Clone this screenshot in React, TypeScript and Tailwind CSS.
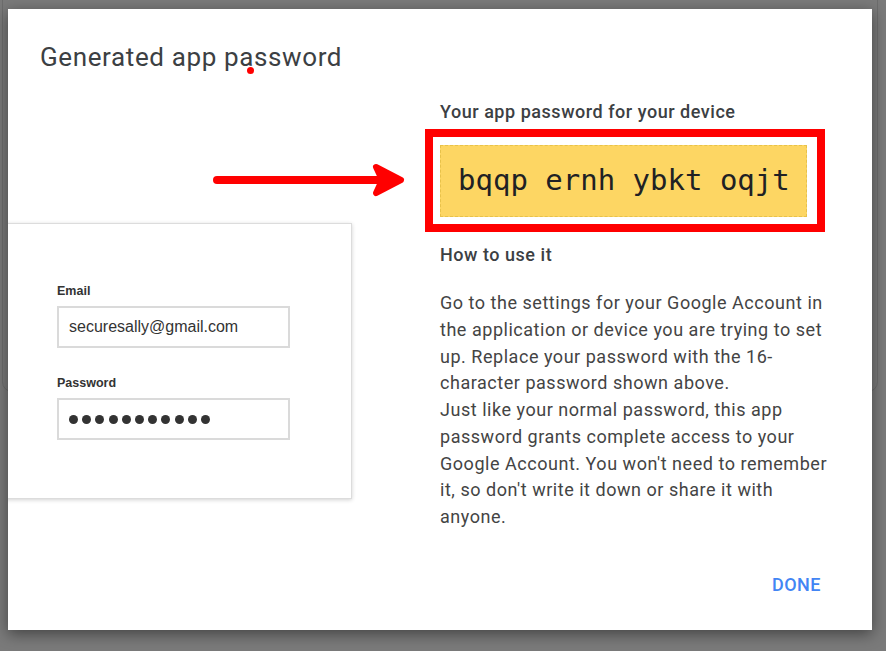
const dots = Array.from({ length: 11 });

function Arrow() {
  return (
    <svg width="432" height="40" viewBox="0 0 432 40" className="block">
      <line x1="209" y1="20" x2="384" y2="20" stroke="#ff0000" strokeWidth="8" strokeLinecap="round" />
      <path
        d="M368 7 L393 20 L368 33 L374 20 Z"
        fill="#ff0000"
        stroke="#ff0000"
        strokeWidth="6"
        strokeLinejoin="round"
      />
    </svg>
  );
}

function SignInCard() {
  return (
    <div className="-ml-[16px] mt-[23px] w-[360px] h-[276px] border border-[#dcdcdc] bg-white shadow-[0_1px_4px_rgba(0,0,0,0.18)] pl-[64px] pt-[59px] font-['Liberation_Sans',Arial,sans-serif] text-[#333]">
      <div className="text-[12.5px] leading-[16px] font-bold">Email</div>
      <div className="mt-[7px] w-[233px] h-[42px] border-2 border-[#dadada] flex items-center pl-[10px] text-[16px]">
        securesally@gmail.com
      </div>
      <div className="mt-[27px] text-[12.5px] leading-[16px] font-bold">Password</div>
      <div className="mt-[7px] w-[233px] h-[42px] border-2 border-[#dadada] flex items-center pl-[10px] gap-[4.2px]">
        {dots.map((_, i) => (
          <span key={i} className="w-[9px] h-[9px] rounded-full bg-[#333]" />
        ))}
      </div>
    </div>
  );
}

export default function App() {
  return (
    <div className="relative w-[886px] h-[651px] overflow-hidden bg-[#7a7a7a] pt-[9px] pl-[8px] font-['Roboto',sans-serif]">
      {/* page card behind the dialog */}
      <div className="absolute left-[2px] top-[-20px] w-[876px] h-[412px] rounded-[10px] border border-[#6c6c6c]" />

      <div className="relative w-[864px] h-[621px] bg-white overflow-hidden flex flex-col shadow-[0_4px_14px_rgba(0,0,0,0.45)]">
        {/* title */}
        <div className="relative pt-[32px] pl-[32px] h-[64px]">
          <h1 className="text-[26px] leading-[32px] tracking-[0.62px] text-[#3c4043]">Generated app password</h1>
          <span className="absolute left-[239px] top-[58px] w-[7px] h-[7px] rounded-full bg-[#ff0000]" />
        </div>

        <div className="flex">
          {/* left: arrow + sign-in form */}
          <div className="w-[432px] shrink-0 flex flex-col">
            <div className="mt-[87px]">
              <Arrow />
            </div>
            <SignInCard />
          </div>

          {/* right: password + instructions */}
          <div className="w-[392px] pt-[27px] tracking-[0.53px]">
            <div className="text-[18px] leading-[24px] font-medium text-[#3c4043]">
              Your app password for your device
            </div>
            <div className="-ml-[15px] mt-[5px] w-[400px] h-[103px] border-[8px] border-[#ff0000] pl-[7px] pr-[10px] pt-[8px] pb-[7px] tracking-normal">
              <div className="h-full bg-[#fdd663] border border-dashed border-[#e8c24a] flex items-center pl-[17px] font-['DejaVu_Sans_Mono',monospace] text-[29px] text-[#202124]">
                bqqp ernh ybkt oqjt
              </div>
            </div>
            <div className="mt-[11px] text-[18px] leading-[24px] font-medium text-[#3c4043]">How to use it</div>
            <p className="mt-[23px] text-[18px] leading-[26.75px] text-[#444]">
              Go to the settings for your Google Account in the application or device you are trying to set up.
              Replace your password with the 16-character password shown above.
              <br />
              Just like your normal password, this app password grants complete access to your Google Account.
              You won't need to remember it, so don't write it down or share it with anyone.
            </p>
          </div>
        </div>

        <div className="mt-auto flex justify-end pr-[51px] pb-[33px]">
          <span className="text-[18px] leading-[24px] font-medium tracking-[0.5px] text-[#4285f4]">DONE</span>
        </div>
      </div>
    </div>
  );
}
